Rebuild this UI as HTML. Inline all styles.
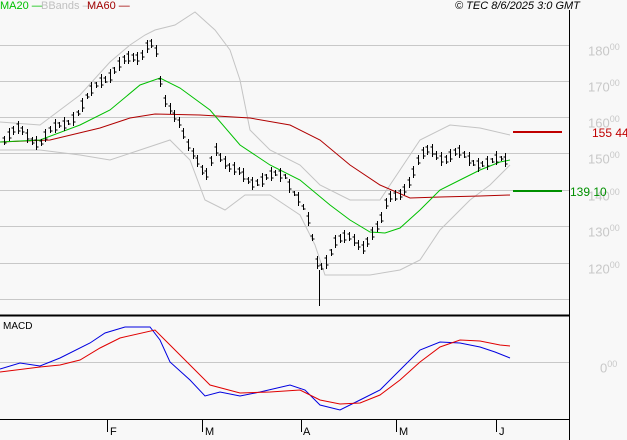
<!DOCTYPE html>
<html><head><meta charset="utf-8"><style>
html,body{margin:0;padding:0;background:#f8f8f8;}
body{width:627px;height:440px;position:relative;overflow:hidden;font-family:"Liberation Sans",sans-serif;}
.t{position:absolute;font-size:11px;white-space:nowrap;}
.ax{position:absolute;left:588px;font-size:13px;color:#c8c8c8;}
.ax sup{font-size:9px;}
</style></head><body>
<div class="t" style="left:0;top:0;color:#00c000">MA20 —</div>
<div class="t" style="left:41px;top:0;color:#c0c0c0">BBands —</div>
<div class="t" style="left:87px;top:0;color:#a00000">MA60 —</div>
<div class="t" style="left:455px;top:0;color:#000;font-style:italic">© TEC 8/6/2025 3:0 GMT</div>
<div class="ax" style="top:42px">180<sup>00</sup></div>
<div class="ax" style="top:78px">170<sup>00</sup></div>
<div class="ax" style="top:114px">160<sup>00</sup></div>
<div class="ax" style="top:150px">150<sup>00</sup></div>
<div class="ax" style="top:187px">140<sup>00</sup></div>
<div class="ax" style="top:223px">130<sup>00</sup></div>
<div class="ax" style="top:260px">120<sup>00</sup></div>
<div class="ax" style="top:359px;left:600px">0<sup>00</sup></div>
<div class="t" style="left:592px;top:126px;color:#c00000;font-size:12px">155 44</div>
<div class="t" style="left:570px;top:185px;color:#009000;font-size:12px">139 10</div>
<div class="t" style="left:3px;top:321px;font-size:10px">MACD</div>
<div class="t" style="left:110px;top:426px">F</div>
<div class="t" style="left:205px;top:426px">M</div>
<div class="t" style="left:303px;top:426px">A</div>
<div class="t" style="left:399px;top:426px">M</div>
<div class="t" style="left:499px;top:426px">J</div>
<svg width="627" height="440" style="position:absolute;left:0;top:0" fill="none">
<g stroke="#c8c8c8" stroke-width="1">
<line x1="0" y1="45.5" x2="569" y2="45.5"/><line x1="0" y1="81.5" x2="569" y2="81.5"/>
<line x1="0" y1="117.5" x2="569" y2="117.5"/><line x1="0" y1="153.5" x2="569" y2="153.5"/>
<line x1="0" y1="190.5" x2="569" y2="190.5"/><line x1="0" y1="226.5" x2="569" y2="226.5"/>
<line x1="0" y1="263.5" x2="569" y2="263.5"/><line x1="0" y1="299.5" x2="569" y2="299.5"/>
<line x1="0" y1="362.5" x2="569" y2="362.5"/>
</g>
<g stroke="#c4c4c4">
<polyline points="0,122 40,125 80,95 110,62 130,45 145,35 155,30 175,25 195,12 215,30 230,50 240,80 250,130 270,150 300,165 320,185 350,200 380,200 400,170 420,140 450,125 480,128 510,135"/>
<polyline points="0,150 40,150 80,155 110,160 140,150 170,140 190,160 205,200 225,210 245,195 270,195 300,215 315,245 325,275 340,275 370,275 400,270 420,260 440,230 470,200 490,185 510,165"/>
</g>
<polyline stroke="#b00000" points="0,142 50,140 100,128 130,118 155,114 200,115 250,118 290,125 320,140 350,165 380,185 410,198 440,197 480,196 510,195"/>
<polyline stroke="#00c000" points="0,142 40,140 80,125 110,110 140,85 160,78 180,88 210,110 240,145 270,165 300,180 330,205 350,220 370,232 385,233 400,228 420,210 440,190 460,180 480,170 500,162 510,160"/>
<path id="bars" stroke="#000"/>
<line x1="513" y1="132" x2="562" y2="132" stroke="#c00000" stroke-width="2"/>
<line x1="513" y1="191" x2="562" y2="191" stroke="#009000" stroke-width="2"/>
<polyline stroke="#0000e0" points="0,369 20,363 40,366 60,358 90,343 105,333 125,327 150,327 160,340 170,362 190,380 205,396 220,392 240,396 260,392 290,385 305,390 320,405 340,410 360,400 380,390 400,370 420,350 440,342 460,343 480,347 495,352 510,358"/>
<polyline stroke="#e00000" points="0,372 40,367 60,365 80,360 100,348 120,338 155,330 170,345 190,365 210,385 240,393 270,392 300,390 320,400 340,404 360,403 380,395 400,380 420,362 440,347 460,340 480,341 500,345 510,346"/>
<line x1="0" y1="315.5" x2="569" y2="315.5" stroke="#000" stroke-width="2"/>
<line x1="0" y1="419.5" x2="569" y2="419.5" stroke="#000"/>
<line x1="569.5" y1="10" x2="569.5" y2="440" stroke="#000"/>
<g stroke="#000"><line x1="107.5" y1="419" x2="107.5" y2="432"/><line x1="202.5" y1="419" x2="202.5" y2="432"/><line x1="301.5" y1="419" x2="301.5" y2="432"/><line x1="396.5" y1="419" x2="396.5" y2="432"/><line x1="496.5" y1="419" x2="496.5" y2="432"/></g>
</svg>
<script>
var k=[[3,140],[20,130],[40,142],[60,125],[80,110],[100,80],[120,65],[140,55],[148,40],[155,45],[158,75],[165,105],[180,120],[190,150],[205,180],[215,145],[230,170],[250,180],[270,178],[285,175],[300,200],[310,230],[318,270],[325,260],[335,240],[350,240],[362,245],[372,232],[380,225],[388,200],[400,190],[410,180],[420,160],[430,148],[445,158],[460,155],[475,160],[490,165],[500,160],[510,158]];
function f(x){for(var i=1;i<k.length;i++)if(x<=k[i][0]){var a=k[i-1],b=k[i];return a[1]+(b[1]-a[1])*(x-a[0])/(b[0]-a[0]);}return k[k.length-1][1];}
var d="",s=7;
for(var x=4;x<=510;x+=4.6){var y=f(x)+Math.sin(x*s)*4,h=5+Math.abs(Math.sin(x*1.7))*9;var xr=Math.round(x)+.5;
d+="M"+xr+" "+(y-h/2).toFixed(0)+"V"+(y+h/2).toFixed(0)+"M"+(xr-2)+" "+(y-h/4).toFixed(0)+"h2M"+xr+" "+(y+h/4).toFixed(0)+"h2";}
d+="M319.5 270V306";
document.getElementById("bars").setAttribute("d",d);
</script>
</body></html>
